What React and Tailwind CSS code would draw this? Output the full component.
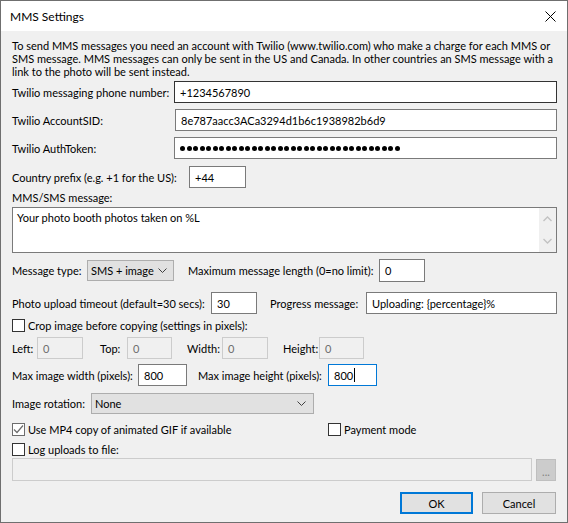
import React from "react";

const inputBase = "flex items-center h-[22px] bg-white border border-[#7a7a7a] px-[5px] whitespace-nowrap overflow-hidden shrink-0";
const disabledInput = "flex items-center h-[22px] bg-[#f0f0f0] border border-[#cccccc] px-[5px] text-[#6d6d6d] shrink-0";

function Chevron() {
  return (
    <svg width="9" height="6" viewBox="0 0 9 6">
      <polyline points="0.5,0.5 4.5,4.5 8.5,0.5" fill="none" stroke="#404040" strokeWidth="1" />
    </svg>
  );
}

function Check({ checked }) {
  return (
    <div className={"w-[13px] h-[13px] shrink-0 bg-white border flex items-center justify-center " + (checked ? "border-[#6d6d6d]" : "border-[#333333]")}>
      {checked && (
        <svg width="11" height="11" viewBox="0 0 11 11">
          <polyline points="1,5.5 4,8.5 10,1.5" fill="none" stroke="#6d6d6d" strokeWidth="1.2" />
        </svg>
      )}
    </div>
  );
}

export default function App() {
  const dots = Array.from({ length: 34 });
  return (
    <div className="w-[568px] h-[523px] border border-[#6f6f6f] bg-[#f0f0f0] flex flex-col font-['Lato',sans-serif] text-[11px] leading-[15px] text-black overflow-hidden whitespace-nowrap">
      {/* Title bar */}
      <div className="h-[30px] shrink-0 bg-white flex items-center justify-between pl-[9px] pr-[10px]">
        <span className="text-[12px]">MMS Settings</span>
        <svg width="11" height="11" viewBox="0 0 11 11" className="mr-[1px]">
          <line x1="0.5" y1="0.5" x2="10.5" y2="10.5" stroke="#000" strokeWidth="1" />
          <line x1="10.5" y1="0.5" x2="0.5" y2="10.5" stroke="#000" strokeWidth="1" />
        </svg>
      </div>

      {/* Body */}
      <div className="flex flex-col pl-[11px] pr-[10px] pt-[8px]">
        <div className="leading-[13px]">
          <div>To send MMS messages you need an account with Twilio (www.twilio.com) who make a charge for each MMS or</div>
          <div>SMS message. MMS messages can only be sent in the US and Canada. In other countries an SMS message with a</div>
          <div>link to the photo will be sent instead.</div>
        </div>

        <div className="flex items-center mt-[3px]">
          <div className="w-[162px] shrink-0">Twilio messaging phone number:</div>
          <div className={inputBase + " flex-1 border-[#333333]"}>+1234567890</div>
        </div>
        <div className="flex items-center mt-[6px]">
          <div className="w-[163px] shrink-0">Twilio AccountSID:</div>
          <div className={inputBase + " flex-1"}>8e787aacc3ACa3294d1b6c1938982b6d9</div>
        </div>
        <div className="flex items-center mt-[6px]">
          <div className="w-[162px] shrink-0">Twilio AuthToken:</div>
          <div className={inputBase + " flex-1 border-[#5a5a5a] gap-[1.5px]"}>
            {dots.map((_, i) => (
              <span key={i} className="w-[5px] h-[5px] rounded-full bg-black shrink-0" />
            ))}
          </div>
        </div>
        <div className="flex items-center mt-[7px]">
          <div className="w-[177px] shrink-0">Country prefix (e.g. +1 for the US):</div>
          <div className={inputBase + " w-[57px]"}>+44</div>
        </div>

        <div className="mt-[3px] h-[13px] leading-[13px]">MMS/SMS message:</div>
        <div className="mt-[3px] h-[46px] bg-white border border-[#7a7a7a] flex">
          <div className="flex-1 pl-[4px] pt-[2px]">Your photo booth photos taken on %L</div>
          <div className="w-[17px] bg-[#f0f0f0] flex flex-col items-center justify-between py-[8px]">
            <svg width="9" height="6" viewBox="0 0 9 6">
              <polyline points="0.5,5 4.5,1 8.5,5" fill="none" stroke="#c2c2c2" strokeWidth="1.3" />
            </svg>
            <svg width="9" height="6" viewBox="0 0 9 6">
              <polyline points="0.5,1 4.5,5 8.5,1" fill="none" stroke="#c2c2c2" strokeWidth="1.3" />
            </svg>
          </div>
        </div>

        <div className="flex items-center mt-[6px] h-[23px]">
          <div className="w-[75px] shrink-0">Message type:</div>
          <div className="w-[87px] h-[21px] shrink-0 bg-[#e1e1e1] border border-[#adadad] flex items-center justify-between pl-[3px] pr-[6px]">
            <span>SMS + image</span>
            <Chevron />
          </div>
          <div className="ml-[14px] w-[191px] shrink-0">Maximum message length (0=no limit):</div>
          <div className={inputBase + " w-[46px] h-[23px]"}>0</div>
        </div>

        <div className="flex items-center mt-[10px]">
          <div className="w-[199px] shrink-0">Photo upload timeout (default=30 secs):</div>
          <div className={inputBase + " w-[46px]"}>30</div>
          <div className="ml-[13px] w-[96px] shrink-0">Progress message:</div>
          <div className={inputBase + " flex-1 shrink"}>Uploading: {"{percentage}"}%</div>
        </div>

        <div className="flex items-center mt-[5px] h-[13px] gap-[3px]">
          <Check />
          <span>Crop image before copying (settings in pixels):</span>
        </div>

        <div className="flex items-center mt-[5px]">
          <div className="w-[25px] shrink-0">Left:</div>
          <div className={disabledInput + " w-[46px]"}>0</div>
          <div className="ml-[17px] w-[27px] shrink-0">Top:</div>
          <div className={disabledInput + " w-[45px]"}>0</div>
          <div className="ml-[15px] w-[35px] shrink-0">Width:</div>
          <div className={disabledInput + " w-[46px]"}>0</div>
          <div className="ml-[15px] w-[36px] shrink-0">Height:</div>
          <div className={disabledInput + " w-[45px]"}>0</div>
        </div>

        <div className="flex items-center mt-[5px]">
          <div className="w-[126px] shrink-0">Max image width (pixels):</div>
          <div className={inputBase + " w-[49px]"}>800</div>
          <div className="ml-[11px] w-[130px] shrink-0">Max image height (pixels):</div>
          <div className={inputBase + " w-[49px] border-[#0078d7]"}>
            <span>800</span>
            <span className="w-[1px] h-[14px] bg-black ml-[1px]" />
          </div>
        </div>

        <div className="flex items-center mt-[7px]">
          <div className="w-[79px] shrink-0">Image rotation:</div>
          <div className="w-[223px] h-[21px] bg-[#e1e1e1] border border-[#adadad] flex items-center justify-between pl-[3px] pr-[7px]">
            <span>None</span>
            <Chevron />
          </div>
        </div>

        <div className="flex items-center mt-[9px] h-[13px]">
          <div className="w-[316px] shrink-0 flex items-center gap-[3px]">
            <Check checked />
            <span>Use MP4 copy of animated GIF if available</span>
          </div>
          <div className="flex items-center gap-[3px]">
            <Check />
            <span>Payment mode</span>
          </div>
        </div>

        <div className="flex items-center mt-[7px] h-[13px] gap-[3px]">
          <Check />
          <span>Log uploads to file:</span>
        </div>

        <div className="flex items-center mt-[2px] h-[23px]">
          <div className="w-[520px] h-[23px] shrink-0 bg-[#f0f0f0] border border-[#cccccc]" />
          <div className="ml-[4px] w-[20px] h-[22px] shrink-0 bg-[#cccccc] border border-[#bfbfbf] flex items-end justify-center text-[#838383] leading-[12px] pb-[2px]">
            ...
          </div>
        </div>

        <div className="flex justify-end mt-[11px] gap-[9px] pr-[1px]">
          <div className="w-[73px] h-[22px] bg-[#e1e1e1] border-2 border-[#0078d7] flex items-center justify-center">OK</div>
          <div className="w-[74px] h-[22px] bg-[#e1e1e1] border border-[#adadad] flex items-center justify-center">Cancel</div>
        </div>
      </div>
    </div>
  );
}
